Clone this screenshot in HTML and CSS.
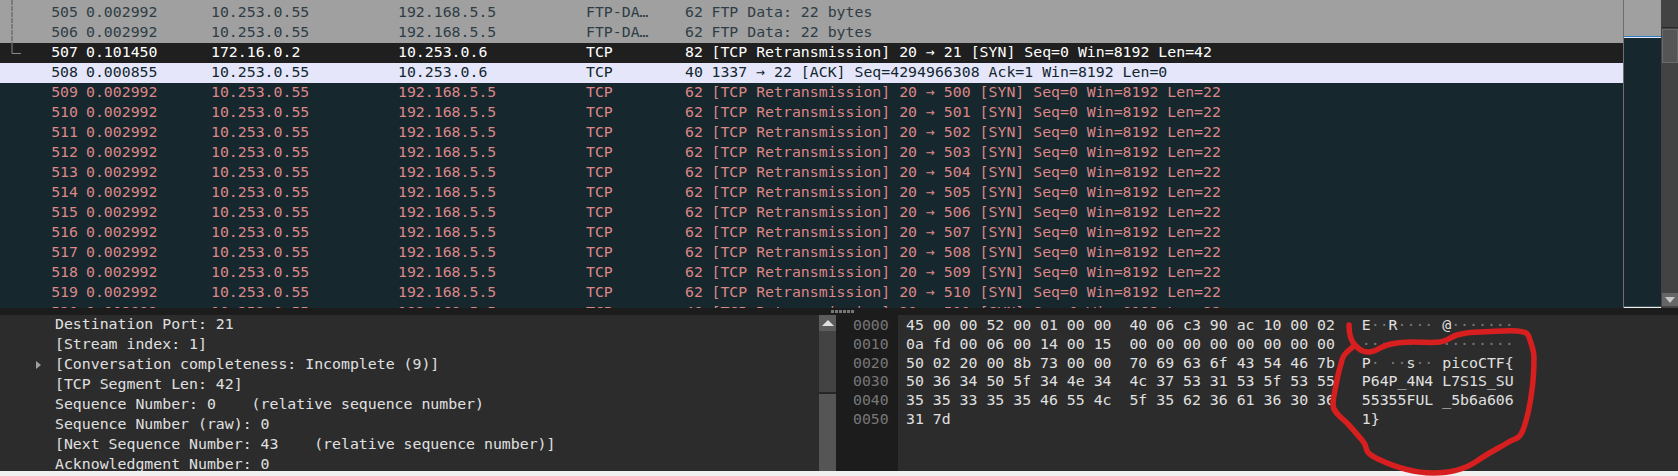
FILE: index.html
```html
<!DOCTYPE html>
<html lang="en">
<head>
    <meta charset="UTF-8">
    <title>Wireshark capture</title>
    <link rel="stylesheet" href="styles.css">
</head>
<body>
    <div class="packets">
        <div class="list">
            <div class="row ftp first"><span class="no">505</span><span class="time">0.002992</span><span>10.253.0.55</span><span>192.168.5.5</span><span>FTP-DA…</span><span>62</span><span class="info">FTP Data: 22 bytes</span></div>
            <div class="row ftp"><span class="no">506</span><span class="time">0.002992</span><span>10.253.0.55</span><span>192.168.5.5</span><span>FTP-DA…</span><span>62</span><span class="info">FTP Data: 22 bytes</span></div>
            <div class="row selected"><span class="no">507</span><span class="time">0.101450</span><span>172.16.0.2</span><span>10.253.0.6</span><span>TCP</span><span>82</span><span class="info">[TCP Retransmission] 20 → 21 [SYN] Seq=0 Win=8192 Len=42</span></div>
            <div class="row ack"><span class="no">508</span><span class="time">0.000855</span><span>10.253.0.55</span><span>10.253.0.6</span><span>TCP</span><span>40</span><span class="info">1337 → 22 [ACK] Seq=4294966308 Ack=1 Win=8192 Len=0</span></div>
            <div class="row bad"><span class="no">509</span><span class="time">0.002992</span><span>10.253.0.55</span><span>192.168.5.5</span><span>TCP</span><span>62</span><span class="info">[TCP Retransmission] 20 → 500 [SYN] Seq=0 Win=8192 Len=22</span></div>
            <div class="row bad"><span class="no">510</span><span class="time">0.002992</span><span>10.253.0.55</span><span>192.168.5.5</span><span>TCP</span><span>62</span><span class="info">[TCP Retransmission] 20 → 501 [SYN] Seq=0 Win=8192 Len=22</span></div>
            <div class="row bad"><span class="no">511</span><span class="time">0.002992</span><span>10.253.0.55</span><span>192.168.5.5</span><span>TCP</span><span>62</span><span class="info">[TCP Retransmission] 20 → 502 [SYN] Seq=0 Win=8192 Len=22</span></div>
            <div class="row bad"><span class="no">512</span><span class="time">0.002992</span><span>10.253.0.55</span><span>192.168.5.5</span><span>TCP</span><span>62</span><span class="info">[TCP Retransmission] 20 → 503 [SYN] Seq=0 Win=8192 Len=22</span></div>
            <div class="row bad"><span class="no">513</span><span class="time">0.002992</span><span>10.253.0.55</span><span>192.168.5.5</span><span>TCP</span><span>62</span><span class="info">[TCP Retransmission] 20 → 504 [SYN] Seq=0 Win=8192 Len=22</span></div>
            <div class="row bad"><span class="no">514</span><span class="time">0.002992</span><span>10.253.0.55</span><span>192.168.5.5</span><span>TCP</span><span>62</span><span class="info">[TCP Retransmission] 20 → 505 [SYN] Seq=0 Win=8192 Len=22</span></div>
            <div class="row bad"><span class="no">515</span><span class="time">0.002992</span><span>10.253.0.55</span><span>192.168.5.5</span><span>TCP</span><span>62</span><span class="info">[TCP Retransmission] 20 → 506 [SYN] Seq=0 Win=8192 Len=22</span></div>
            <div class="row bad"><span class="no">516</span><span class="time">0.002992</span><span>10.253.0.55</span><span>192.168.5.5</span><span>TCP</span><span>62</span><span class="info">[TCP Retransmission] 20 → 507 [SYN] Seq=0 Win=8192 Len=22</span></div>
            <div class="row bad"><span class="no">517</span><span class="time">0.002992</span><span>10.253.0.55</span><span>192.168.5.5</span><span>TCP</span><span>62</span><span class="info">[TCP Retransmission] 20 → 508 [SYN] Seq=0 Win=8192 Len=22</span></div>
            <div class="row bad"><span class="no">518</span><span class="time">0.002992</span><span>10.253.0.55</span><span>192.168.5.5</span><span>TCP</span><span>62</span><span class="info">[TCP Retransmission] 20 → 509 [SYN] Seq=0 Win=8192 Len=22</span></div>
            <div class="row bad"><span class="no">519</span><span class="time">0.002992</span><span>10.253.0.55</span><span>192.168.5.5</span><span>TCP</span><span>62</span><span class="info">[TCP Retransmission] 20 → 510 [SYN] Seq=0 Win=8192 Len=22</span></div>
            <div class="row bad"><span class="no">520</span><span class="time">0.002992</span><span>10.253.0.55</span><span>192.168.5.5</span><span>TCP</span><span>40</span><span class="info">[TCP Retransmission] 20 → 511 [SYN] Seq=0 Win=8192 Len=22</span></div>
            <svg class="tree" width="24" height="58">
                <path d="M12 0V43" stroke="#555" stroke-dasharray="5 1" fill="none"/>
                <path d="M12 43V53.5H21" stroke="#8a8a8a" fill="none"/>
            </svg>
        </div>
        <div class="minimap">
            <div class="map-grey"></div>
            <div class="map-mark"></div>
            <div class="map-dark"></div>
        </div>
        <div class="list-scroll">
            <div class="list-scroll-top"></div>
            <div class="list-scroll-thumb"></div>
            <div class="list-scroll-rest"></div>
            <div class="list-scroll-btn"><i class="arrow-down"></i></div>
        </div>
    </div>

    <div class="splitter"><i class="grip"></i></div>

    <div class="bottom">
        <div class="details">
            <div class="tree-row">Destination Port: 21</div>
            <div class="tree-row">[Stream index: 1]</div>
            <div class="tree-row has-children">[Conversation completeness: Incomplete (9)]</div>
            <div class="tree-row">[TCP Segment Len: 42]</div>
            <div class="tree-row">Sequence Number: 0    (relative sequence number)</div>
            <div class="tree-row">Sequence Number (raw): 0</div>
            <div class="tree-row">[Next Sequence Number: 43    (relative sequence number)]</div>
            <div class="tree-row">Acknowledgment Number: 0</div>
        </div>
        <div class="details-scroll">
            <div class="details-scroll-btn"><i class="arrow-up"></i></div>
            <div class="details-scroll-track"></div>
            <div class="details-scroll-thumb"></div>
        </div>
        <div class="offsets">
            <div>0000</div>
            <div>0010</div>
            <div>0020</div>
            <div>0030</div>
            <div>0040</div>
            <div>0050</div>
        </div>
        <div class="hex">
            <div>45 00 00 52 00 01 00 00  40 06 c3 90 ac 10 00 02   E<b>··</b>R<b>····</b> @<b>·······</b></div>
            <div>0a fd 00 06 00 14 00 15  00 00 00 00 00 00 00 00   <b>········</b> <b>········</b></div>
            <div>50 02 20 00 8b 73 00 00  70 69 63 6f 43 54 46 7b   P<b>·</b> <b>··</b>s<b>··</b> picoCTF{</div>
            <div>50 36 34 50 5f 34 4e 34  4c 37 53 31 53 5f 53 55   P64P_4N4 L7S1S_SU</div>
            <div>35 35 33 35 35 46 55 4c  5f 35 62 36 61 36 30 36   55355FUL _5b6a606</div>
            <div>31 7d                                              1}</div>
        </div>
    </div>

    <div class="footer"></div>

    <!-- red marker scribble over the flag -->
    <svg class="scribble" width="1678" height="476">
        <path d="M1349 325 C1349 333 1350 340 1355 345 S1362 352 1369 352 S1380 347 1387 345 S1403 342 1413 342 S1432 343 1440 342 S1450 337 1457 335 S1468 332 1480 332 S1507 330 1517 331 S1528 333 1530 340 S1534 350 1534 357 S1534 375 1532 390 S1527 420 1523 430 S1515 438 1507 443 S1490 452 1477 461 S1450 473 1433 473 S1395 467 1378 459 S1370 449 1362 440 S1352 428 1347 423 S1333 412 1333 405 S1335 390 1337 380 S1340 368 1342 360 S1350 350 1355 345"/>
    </svg>
</body>
</html>
```

FILE: styles.css
```css
* { box-sizing: border-box; }
html, body { margin: 0; height: 100%; }
body {
    position: relative; width: 1678px; height: 476px; overflow: hidden;
    display: flex; flex-direction: column;
    font-family: "DejaVu Sans Mono", "Liberation Mono", monospace;
    font-size: 14.85px; background-color: #f0f0f0; color: #e0e0e0;
}

/* packet list */
.packets { display: flex; height: 308px; overflow: hidden; flex: none; }
.list {
    position: relative; width: 1624px; height: 308px; overflow: hidden;
    background-color: #16272e; border-right: 1px solid #6e6e6e;
}
.row {
    display: grid; height: 20px; line-height: 19px; white-space: pre;
    grid-template-columns: 78px 133px 187px 188px 99px 18px 1fr;
}
.row.first { height: 23px; padding-top: 3px; }
.no { text-align: right; }
.time { padding-left: 8px; }
.info { padding-left: 8.5px; }
.ftp { background-color: #a0a0a0; color: #2f3d45; }
.selected { background-color: #1f1f1f; color: #fff; }
.ack { background-color: #e6e6fb; color: #12272e; }
.bad { background-color: #16272e; color: #dc8686; }
.tree { position: absolute; left: 0; top: 0; }

.minimap { width: 37px; height: 307px; display: flex; flex-direction: column; border-bottom: 1px solid #3c4f56; }
.map-grey { height: 36px; background-color: #a0a0a0; }
.map-mark { height: 2px; background-color: #e6e6fb; border-top: 1px solid #2f7fc0; }
.map-dark { flex: 1; background-color: #16272e; }

.list-scroll { width: 17px; display: flex; flex-direction: column; background-color: #434343; padding-left: 1px; }
.list-scroll-top { height: 28px; border-bottom: 1px solid #2a2a2a; }
.list-scroll-thumb { height: 34px; margin: 1px 0; background-color: #555; border: 1px solid #6a6a6a; }
.list-scroll-rest { flex: 1; }
.list-scroll-btn { height: 13px; margin-bottom: 2px; background-color: #666; display: flex; align-items: center; justify-content: center; }
.arrow-down { border: 5px solid transparent; border-bottom: 0; border-top: 6px solid #c8c8c8; }

/* splitter */
.splitter { position: relative; height: 7px; flex: none; background-color: #1c1c1c; }
.grip {
    position: absolute; left: 831px; top: 2px; width: 23px; height: 3px;
    background: repeating-linear-gradient(90deg, #777 0 3px, transparent 3px 4px);
}

/* bottom panes */
.bottom { display: flex; height: 156px; flex: none; background-color: #2c2c2c; overflow: hidden; }
.details { width: 819px; overflow: hidden; }
.tree-row { position: relative; height: 20px; line-height: 19px; padding-left: 55px; white-space: pre; }
.has-children::before {
    content: ""; position: absolute; left: 36px; top: 6px;
    border: 4px solid transparent; border-right: 0; border-left: 5px solid #a0a0a0;
}

.details-scroll { width: 17px; display: flex; flex-direction: column; background-color: #434343; }
.details-scroll-btn { height: 16px; background-color: #5c5c5c; display: flex; align-items: center; justify-content: center; }
.arrow-up { border: 6px solid transparent; border-top: 0; border-bottom: 6px solid #e0e0e0; }
.details-scroll-track { height: 63px; border-bottom: 2px solid #262626; }
.details-scroll-thumb { flex: 1; background-color: #555; }

.offsets { width: 62px; padding: 1px 0 0 17px; background-color: #1c1c1c; color: #777; }
.hex { flex: 1; padding: 1px 0 0 8px; }
.offsets div, .hex div { height: 18.8px; line-height: 18.8px; white-space: pre; }
.hex b { font-weight: normal; color: #777; }

.footer { flex: 1; background-color: #f0f0f0; }

.scribble { position: absolute; left: 0; top: 0; pointer-events: none; }
.scribble path { fill: none; stroke: #d81f1f; stroke-width: 5.5; stroke-linecap: round; stroke-linejoin: round; }
```
